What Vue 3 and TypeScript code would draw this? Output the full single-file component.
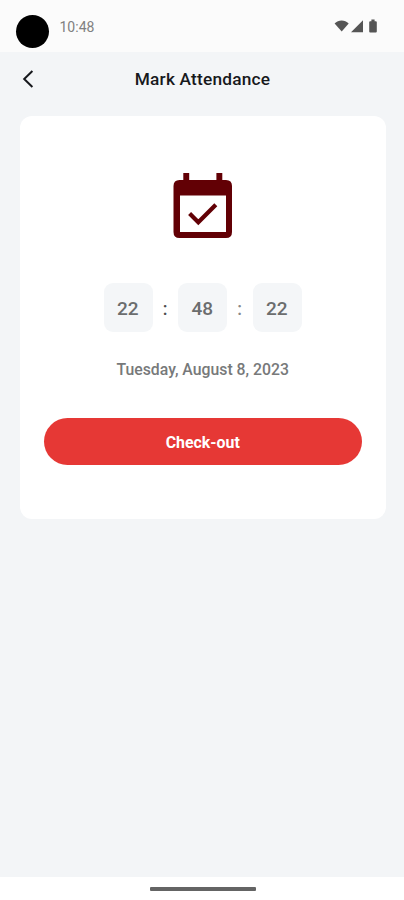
<script setup lang="ts">
import { ref } from 'vue'

const clock = ref('10:48')
const time = ref<string[]>(['22', '48', '22'])
const date = ref('Tuesday, August 8, 2023')
</script>

<template>
  <div class="screen">
    <header class="status">
      <span class="camera"></span>
      <span class="clock">{{ clock }}</span>
      <svg class="signals" width="44" height="14" viewBox="0 0 44 14" fill="#555" aria-hidden="true">
        <path d="M0.600 3.400C4.500 -0.600 10.800 -0.600 14.700 3.400L7.700 11.600Z" />
        <path d="M29 0.300V12.300H17Z" />
        <path d="M37.400 1.300V-0.400H40.600V1.300H41.800Q42.800 1.300 42.800 2.300V11.400Q42.800 12.400 41.800 12.400H36.200Q35.200 12.400 35.200 11.400V2.300Q35.200 1.300 36.200 1.300Z" />
      </svg>
    </header>

    <div class="app-bar">
      <button class="back" aria-label="Back">
        <svg width="12" height="18" viewBox="0 0 12 18" fill="none" stroke="#16181c" stroke-width="2">
          <path d="M10.400 1L2.200 9L10.400 17" />
        </svg>
      </button>
      <h1 class="title">Mark Attendance</h1>
    </div>

    <main class="content">
      <section class="card">
        <svg class="calendar" width="60" height="66" viewBox="0 0 60 66" aria-hidden="true">
          <path
            fill="#620005"
            fill-rule="evenodd"
            d="M10.300 0H16.200V7H43.400V0H49.300V7H53Q59 7 59 13V59Q59 65 53 65H6.500Q0.500 65 0.500 59V13Q0.500 7 6.500 7H10.300ZM7 22.500V59H53V22.500Z"
          />
          <path fill="none" stroke="#620005" stroke-width="4.200" d="M16.600 40.500L25.300 49.200L42.800 31.700" />
        </svg>

        <div class="timer">
          <template v-for="(part, i) in time" :key="i">
            <span v-if="i > 0" class="colon" :class="{ faded: i === 2 }">:</span>
            <span class="tile">{{ part }}</span>
          </template>
        </div>

        <p class="date">{{ date }}</p>
        <button class="checkout">Check-out</button>
      </section>
    </main>

    <footer class="nav"><span class="handle"></span></footer>
  </div>
</template>

<style>
body {
  margin: 0;
}
</style>

<style scoped>
.screen {
  width: 404px;
  height: 900px;
  display: flex;
  flex-direction: column;
  overflow: hidden;
  background: #f3f5f7;
  font-family: Roboto, 'Liberation Sans', sans-serif;
}
button {
  border: 0;
  padding: 0;
  font-family: inherit;
}
svg {
  display: block;
  overflow: visible;
}
.status {
  height: 52px;
  box-sizing: border-box;
  padding: 15px 26px 0 15.5px;
  display: flex;
  align-items: flex-start;
  background: #fbfbfb;
}
.camera {
  width: 33px;
  height: 33px;
  border-radius: 50%;
  background: #000;
}
.clock {
  margin: 4px 0 0 11px;
  font-size: 14px;
  line-height: 16px;
  color: #808080;
}
.signals {
  margin: 5px 0 0 auto;
}
.app-bar {
  height: 64px;
  box-sizing: border-box;
  padding: 0 21px 10px 22px;
  display: grid;
  grid-template-columns: 12px 1fr 12px;
  align-items: center;
}
.back {
  background: none;
}
.title {
  margin: 0;
  text-align: center;
  font-size: 17.3px;
  line-height: 20px;
  font-weight: 500;
  letter-spacing: 0.2px;
  color: #17191c;
}
.content {
  flex: 1;
  padding: 0 18.5px 0 20px;
}
.card {
  height: 403px;
  box-sizing: border-box;
  padding: 57px 24px 0;
  display: flex;
  flex-direction: column;
  align-items: center;
  border-radius: 12px;
  background: #fff;
}
.timer {
  margin-top: 43.500px;
  display: flex;
  align-items: center;
}
.tile {
  width: 49px;
  height: 49px;
  box-sizing: border-box;
  padding: 2px 1px 0 0;
  border-radius: 9px;
  display: grid;
  place-items: center;
  background: #f4f6f8;
  font-size: 19px;
  font-weight: 500;
  color: #6b6d6e;
}
.colon {
  width: 25.500px;
  box-sizing: border-box;
  padding: 2px 1px 0 0;
  text-align: center;
  font-size: 18px;
  font-weight: 500;
  color: #4c4c4c;
}
.faded {
  color: #888;
}
.date {
  margin: 28.500px 0 0;
  font-size: 15.8px;
  line-height: 20px;
  font-weight: 500;
  color: #77797a;
}
.checkout {
  width: 100%;
  height: 47px;
  margin-top: 37.5px;
  padding-top: 3px;
  border-radius: 24px;
  background: #e63835;
  color: #fff;
  font-size: 15.9px;
  font-weight: 700;
}
.nav {
  height: 23px;
  display: flex;
  justify-content: center;
  align-items: center;
  background: #fff;
}
.handle {
  width: 106px;
  height: 4px;
  margin-left: 1px;
  border-radius: 1px;
  background: #646464;
}
</style>
